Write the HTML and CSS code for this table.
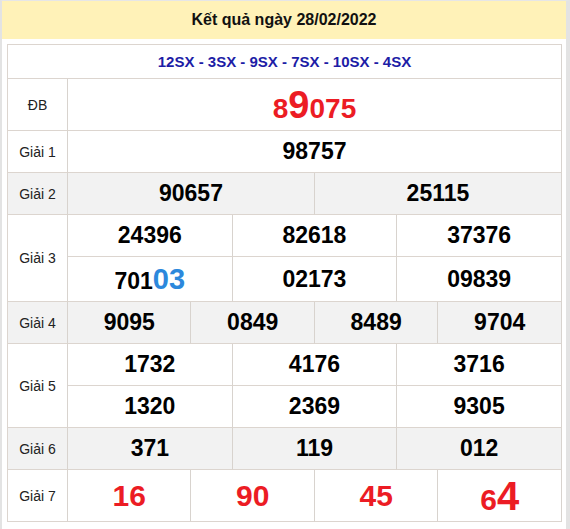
FILE: index.html
```html
<!DOCTYPE html>
<html lang="vi">
<head>
<meta charset="utf-8">
<title>Kết quả ngày 28/02/2022</title>
<link rel="stylesheet" href="styles.css">
</head>
<body>
<div class="frame">
  <div class="title">Kết quả ngày 28/02/2022</div>
  <div class="content">
    <table class="kq">
      <colgroup>
        <col class="c-lbl">
        <col span="12">
      </colgroup>
      <tr class="r-sx"><td colspan="13" class="sx">12SX - 3SX - 9SX - 7SX - 10SX - 4SX</td></tr>
      <tr class="r-db"><td class="lbl">ĐB</td><td colspan="12" class="num db">8<span class="db-big">9</span>075</td></tr>
      <tr class="r-n"><td class="lbl">Giải 1</td><td colspan="12" class="num">98757</td></tr>
      <tr class="r-n alt"><td class="lbl">Giải 2</td><td colspan="6" class="num">90657</td><td colspan="6" class="num">25115</td></tr>
      <tr class="r-n"><td class="lbl" rowspan="2">Giải 3</td><td colspan="4" class="num">24396</td><td colspan="4" class="num">82618</td><td colspan="4" class="num">37376</td></tr>
      <tr class="r-g3b"><td colspan="4" class="num">701<span class="blue">03</span></td><td colspan="4" class="num">02173</td><td colspan="4" class="num">09839</td></tr>
      <tr class="r-n alt"><td class="lbl">Giải 4</td><td colspan="3" class="num">9095</td><td colspan="3" class="num">0849</td><td colspan="3" class="num">8489</td><td colspan="3" class="num">9704</td></tr>
      <tr class="r-n"><td class="lbl" rowspan="2">Giải 5</td><td colspan="4" class="num">1732</td><td colspan="4" class="num">4176</td><td colspan="4" class="num">3716</td></tr>
      <tr class="r-n"><td colspan="4" class="num">1320</td><td colspan="4" class="num">2369</td><td colspan="4" class="num">9305</td></tr>
      <tr class="r-n alt"><td class="lbl">Giải 6</td><td colspan="4" class="num">371</td><td colspan="4" class="num">119</td><td colspan="4" class="num">012</td></tr>
      <tr class="r-g7"><td class="lbl">Giải 7</td><td colspan="3" class="num g7">16</td><td colspan="3" class="num g7">90</td><td colspan="3" class="num g7">45</td><td colspan="3" class="num g7">6<span class="g7-big">4</span></td></tr>
    </table>
  </div>
</div>
</body>
</html>
```
FILE: styles.css
```css
html, body {
  margin: 0;
  padding: 0;
  background: #ffffff;
}

.frame {
  box-sizing: border-box;
  width: 570px;
  min-height: 529px;
  border-top: 1px solid #e6e6e6;
  border-left: 2px solid #e3e3e3;
  border-right: 4px solid #e3e3e3;
  font-family: "Liberation Sans", Arial, sans-serif;
  color: #000;
}

.title {
  height: 38px;
  line-height: 37px;
  background: #fff2b8;
  text-align: center;
  font-weight: bold;
  font-size: 16px;
  color: #111;
}

.content {
  padding: 5px 4px 0 5px;
}

.kq {
  width: 555px;
  table-layout: fixed;
  border-spacing: 0;
  border-top: 1px solid #dcd5cf;
  border-left: 1px solid #dcd5cf;
}

.c-lbl {
  width: 60px;
}

.kq td {
  box-sizing: border-box;
  padding: 0;
  border-right: 1px solid #d8d3ce;
  border-bottom: 1px solid #dcd5cf;
  text-align: center;
  vertical-align: middle;
}

.r-sx td { height: 34px; }
.r-db td { height: 52px; }
.r-n td { height: 42px; }
.r-g3b td { height: 45px; }
.r-g7 td { height: 52px; }

.alt td { background: #f2f2f2; }

.sx {
  font-size: 15px;
  font-weight: bold;
  color: #1d1da6;
}

.lbl {
  font-size: 14px;
  color: #222;
}

.num {
  font-size: 23px;
  font-weight: bold;
  color: #000;
  line-height: 1;
}

.db {
  font-size: 28px;
  color: #ec1c24;
}

.db-big {
  font-size: 38px;
}

.blue {
  font-size: 29px;
  color: #2c88dc;
}

.g7 {
  font-size: 30px;
  color: #ec1c24;
}

.g7-big {
  font-size: 40px;
}
```
